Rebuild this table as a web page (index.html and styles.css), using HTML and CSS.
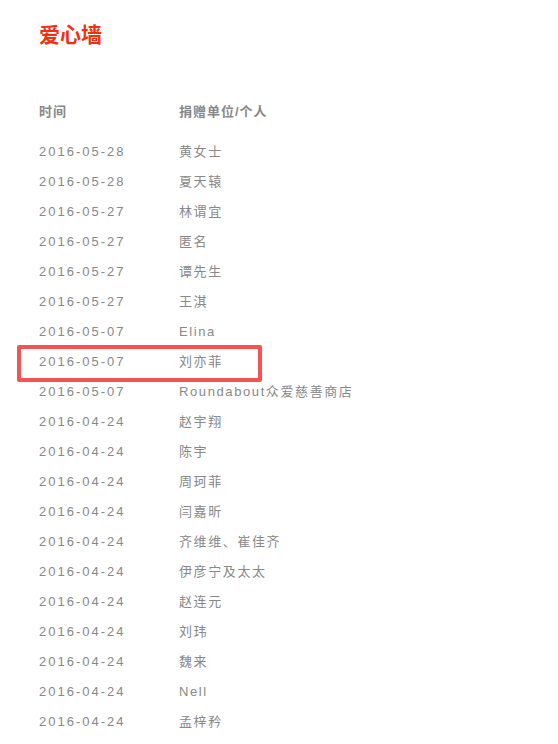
FILE: index.html
```html
<!DOCTYPE html>
<html lang="zh">
<head>
<meta charset="utf-8">
<link rel="stylesheet" href="styles.css">
</head>
<body>
<div class="page">
  <h1 class="title">爱心墙</h1>
  <div class="table">
    <div class="row head"><span class="date">时间</span><span class="name">捐赠单位/个人</span></div>
    <div class="list">
      <div class="row"><span class="date">2016-05-28</span><span class="name">黄女士</span></div>
      <div class="row"><span class="date">2016-05-28</span><span class="name">夏天辕</span></div>
      <div class="row"><span class="date">2016-05-27</span><span class="name">林谓宜</span></div>
      <div class="row"><span class="date">2016-05-27</span><span class="name">匿名</span></div>
      <div class="row"><span class="date">2016-05-27</span><span class="name">谭先生</span></div>
      <div class="row"><span class="date">2016-05-27</span><span class="name">王淇</span></div>
      <div class="row"><span class="date">2016-05-07</span><span class="name">Elina</span></div>
      <div class="row highlight"><span class="date">2016-05-07</span><span class="name">刘亦菲</span></div>
      <div class="row"><span class="date">2016-05-07</span><span class="name">Roundabout众爱慈善商店</span></div>
      <div class="row"><span class="date">2016-04-24</span><span class="name">赵宇翔</span></div>
      <div class="row"><span class="date">2016-04-24</span><span class="name">陈宇</span></div>
      <div class="row"><span class="date">2016-04-24</span><span class="name">周珂菲</span></div>
      <div class="row"><span class="date">2016-04-24</span><span class="name">闫嘉昕</span></div>
      <div class="row"><span class="date">2016-04-24</span><span class="name">齐维维、崔佳齐</span></div>
      <div class="row"><span class="date">2016-04-24</span><span class="name">伊彦宁及太太</span></div>
      <div class="row"><span class="date">2016-04-24</span><span class="name">赵连元</span></div>
      <div class="row"><span class="date">2016-04-24</span><span class="name">刘玮</span></div>
      <div class="row"><span class="date">2016-04-24</span><span class="name">魏来</span></div>
      <div class="row"><span class="date">2016-04-24</span><span class="name">Nell</span></div>
      <div class="row"><span class="date">2016-04-24</span><span class="name">孟梓矜</span></div>
    </div>
  </div>
</div>
</body>
</html>
```
FILE: styles.css
```css
html, body {
  margin: 0;
  padding: 0;
  background: #ffffff;
}
body {
  font-family: "Liberation Sans", "Noto Sans CJK SC", sans-serif;
  color: #888888;
}
.page {
  padding: 21px 0 0 39px;
}
.title {
  margin: 0;
  font-size: 21px;
  line-height: 28px;
  font-weight: bold;
  color: #f2300f;
}
.table {
  margin-top: 48px;
}
.row {
  display: grid;
  grid-template-columns: 140px auto;
  height: 30px;
  line-height: 30px;
  font-size: 13px;
  letter-spacing: 2px;
}
.row .name {
  letter-spacing: 1.6px;
}
.row.head {
  font-weight: bold;
  letter-spacing: 1px;
  margin-bottom: 10px;
}
.row.head .name {
  letter-spacing: 1px;
}
.row.highlight {
  position: relative;
}
.row.highlight::after {
  content: "";
  position: absolute;
  left: -22px;
  top: -2px;
  width: 245px;
  height: 37px;
  border: 4px solid #f55252;
  border-radius: 2px;
  box-sizing: border-box;
}
```
